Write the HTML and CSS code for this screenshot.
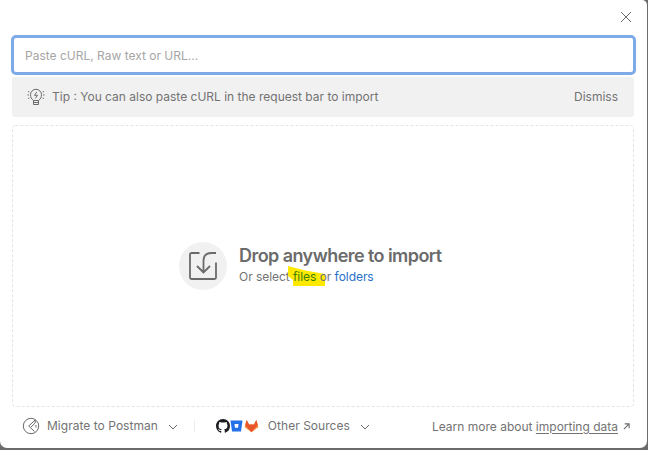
FILE: index.html
```html
<!DOCTYPE html>
<html lang="en">
<head>
<meta charset="utf-8">
<title>Import</title>
<link rel="stylesheet" href="styles.css">
</head>
<body>
<main class="modal">
  <header class="modal-header">
    <button class="close" aria-label="Close"><svg width="12" height="12" viewBox="0 0 12 12"><path d="M1 1l10 10M11 1L1 11"/></svg></button>
  </header>
  <input class="source-input" type="text" placeholder="Paste cURL, Raw text or URL...">
  <section class="tip">
    <svg class="bulb" width="18" height="18" viewBox="0 0 18 18"><path d="M6.500 12.500C4.500 11.200 3.500 9 3.500 6.800a5.500 5.500 0 0 1 11 0c0 2.200-1 4.400-3 5.700zM6.500 12.500v4h5v-4M6.500 14.500h5M9.700 4L7.500 7.300h3L8.400 10.300M1 3.500l1.300.5M.5 7h1.500M1 10.500l1.300-.5M17 3.500l-1.300.5M17.500 7h-1.500M17 10.500l-1.300-.5"/></svg>
    <span class="tip-text">Tip : You can also paste cURL in the request bar to import</span>
    <button class="dismiss">Dismiss</button>
  </section>
  <section class="dropzone">
    <svg class="drop-outline" width="622" height="282"><rect x=".5" y=".5" width="621" height="281" rx="3"/></svg>
    <div class="drop-icon"><svg width="30" height="30" viewBox="0 0 30 30"><path d="M11.500 2H3.500Q2 2 2 3.500v23Q2 28 3.500 28h23q1.500 0 1.500-1.500V11.500M28 2h-4.500Q15.500 2 15.500 10v11M9 15l6.500 6.500L22 15"/></svg></div>
    <div class="drop-copy">
      <h1>Drop anywhere to import</h1>
      <p>Or select <span class="marked"><svg class="marker" width="38" height="20" viewBox="0 0 38 20"><path d="M0 0l15 4 22 4v12H5v-6L0 10z"/></svg><a class="files">files</a> o</span>r <a class="folders">folders</a></p>
    </div>
  </section>
  <footer class="footer">
    <button class="menu migrate">
      <svg class="compass" width="18" height="18" viewBox="0 0 18 18"><circle cx="9" cy="9" r="7.700"/><path d="M13.200 3L6.700 9l5.800 5.500M13.200 3v3L9 10M14 8v2.500"/></svg>
      <span>Migrate to Postman</span>
      <svg class="chevron" width="10" height="6" viewBox="0 0 10 6"><path d="M1 1l4 4 4-4"/></svg>
    </button>
    <span class="divider"></span>
    <button class="menu others">
      <span class="logos">
        <span class="logo"><svg width="14" height="14" viewBox="0 0 16 16"><path fill="#1c1d20" d="M8 0C3.580 0 0 3.580 0 8c0 3.540 2.290 6.530 5.470 7.590.4.070.55-.17.55-.38 0-.19-.01-.82-.01-1.490-2.010.37-2.530-.49-2.690-.94-.09-.23-.48-.94-.82-1.130-.28-.15-.68-.52-.01-.53.63-.01 1.080.58 1.230.82.72 1.210 1.870.87 2.330.66.070-.52.280-.87.510-1.070-1.780-.2-3.640-.89-3.640-3.950 0-.87.310-1.590.82-2.150-.08-.2-.36-1.020.08-2.120 0 0 .67-.21 2.200.82.64-.18 1.320-.27 2-.27s1.360.09 2 .27c1.530-1.040 2.200-.82 2.200-.82.44 1.100.16 1.920.08 2.120.51.56.82 1.270.82 2.150 0 3.070-1.870 3.750-3.650 3.950.29.25.54.73.54 1.480 0 1.070-.01 1.930-.01 2.200 0 .21.150.46.550.38A8.010 8.010 0 0 0 16 8c0-4.420-3.580-8-8-8z"/></svg></span>
        <span class="logo"><svg width="13" height="12" viewBox="0 0 13 12"><path fill="#2470e8" d="M.5.500h12L11 11.500H2z"/><path fill="#fff" d="M4.500 4h4L8 7.800H5z"/></svg></span>
        <span class="logo"><svg width="15" height="14" viewBox="0 0 15 13"><path fill="#f78b38" d="M.6 7.400L2.700.5 5 5h5L12.300.5l2.100 6.900-6.900 5.300z"/><path fill="#e9552c" d="M2.700.5L5 5l2.500 7.700L1.200 5.500zM12.300.5L10 5l-2.500 7.700 6.300-7.200zM5 5h5l-2.500 7.700z"/></svg></span>
      </span>
      <span>Other Sources</span>
      <svg class="chevron" width="10" height="6" viewBox="0 0 10 6"><path d="M1 1l4 4 4-4"/></svg>
    </button>
    <p class="learn">Learn more about <a>importing data</a><svg width="8" height="8" viewBox="0 0 8 8"><path d="M1 7l6-6M2 1h5v5"/></svg></p>
  </footer>
</main>
</body>
</html>
```
FILE: styles.css
```css
* { box-sizing: border-box; }
body {
  margin: 0;
  height: 450px;
  overflow: hidden;
  background: #6b6b6b;
  color: #737373;
  font: 12px/16px Inter, "Liberation Sans", sans-serif;
}
button { border: 0; padding: 0; background: none; color: inherit; font: inherit; letter-spacing: inherit; }
svg { display: block; flex: none; fill: none; stroke: #6b6b6b; stroke-width: 1; }
h1, p { margin: 0; }
.modal {
  width: 647px;
  height: 448px;
  padding: 0 12px;
  background: #fff;
  border-radius: 0 5px 7px 7px;
  display: flex;
  flex-direction: column;
}
.modal-header { height: 35px; display: flex; justify-content: flex-end; align-items: flex-start; padding: 11px 3px 0 0; }
.source-input {
  width: 625px;
  height: 40px;
  margin: 0 -2px 0 -1.5px;
  padding: 1px 11px 0 11.5px;
  border: 3px solid #7eabe8;
  border-radius: 5px;
  outline: 0;
  color: #6b6b6b;
  font: inherit;
}
.source-input::placeholder { color: #a6a6a6; opacity: 1; }
.tip {
  width: 622px;
  height: 40px;
  margin-top: 2px;
  padding: 0 16px 0 15px;
  display: flex;
  align-items: center;
  border-radius: 3px;
  background: #f1f1f1;
}
.tip-text { margin-left: 7px; flex: 1; }
.dismiss { letter-spacing: 0; }
.dropzone {
  position: relative;
  width: 622px;
  height: 282px;
  margin-top: 8px;
  padding-left: 167px;
  display: flex;
  align-items: center;
  gap: 12px;
}
.drop-outline { position: absolute; inset: 0; stroke: #e4e4e4; stroke-dasharray: 3 2; }
.drop-icon { width: 48px; height: 48px; border-radius: 50%; background: #f1f1f1; display: grid; place-items: center; }
.drop-icon svg { stroke-width: 1.8; }
h1 { font-size: 18px; line-height: 22px; font-weight: 600; letter-spacing: -.56px; color: #6b6b6b; }
.drop-copy p { line-height: 20px; letter-spacing: -.05px; }
.files { color: #398000; }
.folders { color: #2870ca; }
.marked { position: relative; z-index: 0; }
.marker { position: absolute; left: -5px; top: -3px; z-index: -1; fill: #ffe900; stroke: none; }
.footer { height: 41px; display: flex; align-items: center; padding: 0 3px 3px 10px; }
.menu { display: flex; align-items: center; letter-spacing: .03px; }
.compass { margin-right: 7px; }
.chevron { margin: 2px 0 0 10px; }
.divider { width: 1px; height: 12px; background: #ededed; margin: 0 21px 0 16px; }
.logos { display: flex; margin-right: 10px; }
.logo { width: 14px; height: 16px; display: grid; place-items: center; }
.logo svg { stroke: none; }
.learn { display: flex; align-items: center; margin: 1px 2px 0 auto; white-space: pre; }
.learn a { text-decoration: underline; text-underline-offset: 2px; }
.learn svg { width: 7px; height: 7px; margin-left: 5px; stroke-width: 1.2; }
```
